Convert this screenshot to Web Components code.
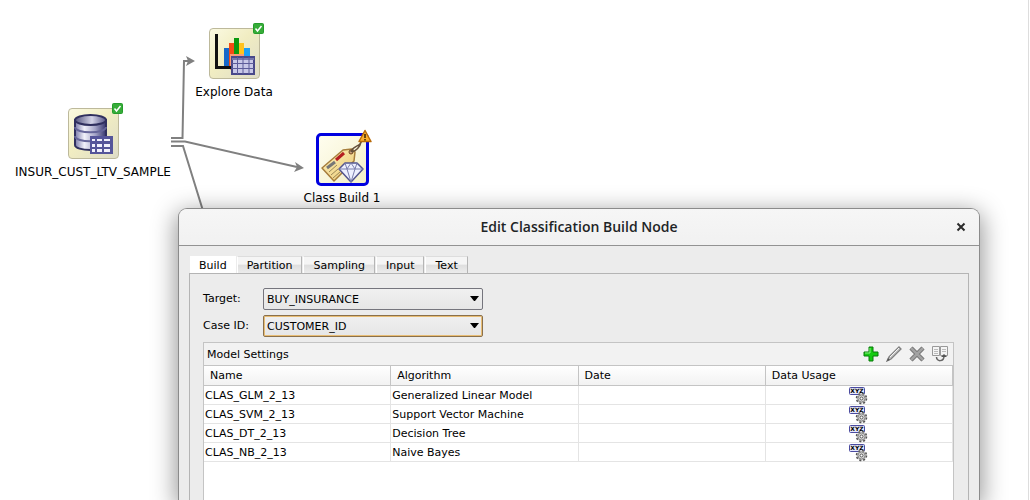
<!DOCTYPE html>
<html lang="en">
<head>
<meta charset="utf-8">
<title>Edit Classification Build Node</title>
<style>
html, body { margin: 0; height: 100%; }
body { font: 11px/16px "DejaVu Sans", sans-serif; color: #000; background: #fff; }
</style>
</head>
<body>
<workflow-canvas>
  <workflow-links></workflow-links>
  <workflow-node icon="source" status="ok" style="left:13px;top:108px">INSUR_CUST_LTV_SAMPLE</workflow-node>
  <workflow-node icon="explore" status="ok" style="left:154px;top:28px">Explore Data</workflow-node>
  <workflow-node icon="build" status="warn" selected style="left:262px;top:134px">Class Build 1</workflow-node>
  <node-dialog heading="Edit Classification Build Node">
    <tab-strip tabs="Build,Partition,Sampling,Input,Text">
      <combo-field label="Target:" value="BUY_INSURANCE"></combo-field>
      <combo-field label="Case ID:" value="CUSTOMER_ID" active></combo-field>
      <model-settings></model-settings>
    </tab-strip>
  </node-dialog>
</workflow-canvas>

<script>
const define = (name, render) => customElements.define(name, class extends HTMLElement {
  connectedCallback() {
    if (this.shadowRoot) return;
    this.attachShadow({ mode: 'open' }).innerHTML = render(this);
  }
});

const art = {
  source: `<defs><linearGradient id="m"><stop offset="0" stop-color="#7878a8"/><stop offset=".3" stop-color="#f2f2fb"/><stop offset=".65" stop-color="#a5a5c8"/><stop offset="1" stop-color="#34346c"/></linearGradient>
    <linearGradient id="t"><stop offset="0" stop-color="#55557f"/><stop offset=".55" stop-color="#d4d4e8"/><stop offset="1" stop-color="#565688"/></linearGradient></defs>
    <path d="M6 11v25c0 3 7 5 15.500 5S37 39 37 36V11z" fill="url(#m)" stroke="#30305f" stroke-width="2"/>
    <path d="M6 18c0 7 31 7 31 0M6 27c0 7 31 7 31 0" fill="none" stroke="#66669a" stroke-width="2"/>
    <ellipse cx="21.500" cy="11" rx="15.500" ry="5" fill="url(#t)" stroke="#30305f" stroke-width="2"/>
    <path d="M21 27h23v18H21z" fill="#55559a"/>
    <path d="M23 30h3v2h-3zM28 30h5v2h-5zM35 30h6v2h-6zM23 35h3v3h-3zM28 35h5v3h-5zM35 35h6v3h-6zM23 40h3v3h-3zM28 40h5v3h-5zM35 40h6v3h-6z" fill="#f1f1fc"/>`,
  explore: `<path d="M14 19h6v21h-6z" fill="#1768c8"/><path d="M19 14h5v26h-5z" fill="#f44b16"/><path d="M24 9h5v25h-5z" fill="#0a990f"/><path d="M29 14h5v20h-5z" fill="#ffc31c"/><path d="M34 19h6v12h-6z" fill="#1ba0f5"/>
    <path d="M20 25h14v16H20z" fill="#f89a78"/><path d="M6.500 5v33.500H24" fill="none" stroke="#111" stroke-width="3"/>
    <path d="M22 28h22v17H22z" fill="#c8c8e8" stroke="#49498a" stroke-width="2"/><path d="M22 30h22" stroke="#7777ad" stroke-width="2"/><path d="M27.500 28v17M33 28v17M39 28v17M22 34.500h22M22 39.500h22" stroke="#5c5c9a"/>`,
  build: `<defs><linearGradient id="g" x2="1" y2="1"><stop stop-color="#fff3bd"/><stop offset="1" stop-color="#e9c772"/></linearGradient></defs>
    <path d="M4 33 25 15l9-1 3 3-1 9-20 20z" fill="url(#g)" stroke="#a77e3c" stroke-width="1.500" stroke-linejoin="round"/>
    <path d="m9 33 8-6" stroke="#777" stroke-width="3"/><path d="m18 25 8-7" stroke="#b51e20" stroke-width="3"/>
    <path d="m13 40 7-6M15 43l7-6M11 37l8-7" stroke="#9b8856"/><circle cx="33" cy="17" r="2" fill="#c9a37e" stroke="#70421e"/>
    <path d="M33 17C35 10 41 13 44 6M34 17c4-1 8-5 9-10" fill="none" stroke="#65513c" stroke-width="1.500"/>
    <path d="m21 34 6-6h12l6 6-12 13z" fill="#edf0ff" stroke="#53558e" stroke-width="1.500" stroke-linejoin="round"/>
    <path d="M21 34h24M27 28l2 6 4-6 4 6 2-6M29 34l4 13 4-13" fill="none" stroke="#7a7ead"/>`
};
const badge = {
  ok: `<svg class="badge" width="11" height="11"><rect x=".5" y=".5" width="10" height="10" rx="1" fill="#36ac38" stroke="#249c2b"/><path d="m2.500 5.500 2 2.500 4-5" fill="none" stroke="#fff" stroke-width="1.500"/></svg>`,
  warn: `<svg class="badge" width="14" height="14" viewBox="0 0 14 14"><path d="M7 1.500 13 12.500H1z" fill="#fbb030" stroke="#b96b0a" stroke-width="1.500" stroke-linejoin="round"/><path d="M7 5v4M7 10v1.500" stroke="#3a2000" stroke-width="1.500"/></svg>`
};

define('workflow-canvas', () => `
  <style>:host{display:block;position:relative;min-height:100%;overflow:hidden;box-sizing:border-box;border-right:1px solid #ddd;margin-right:1px}</style>
  <slot></slot>`);

define('workflow-links', () => `
  <style>:host{display:block;position:absolute;inset:0} svg{display:block;overflow:visible}</style>
  <svg width="320" height="220" fill="none" stroke="#808080" stroke-width="2" aria-hidden="true">
    <path d="M171 138h11.500L184 61h5M171 141.500h14L297 167M171 146h12l21 68"/>
    <path d="m186 56 9 5-9 5 2-5zM295 162l9 6-10 4 3-5z" fill="#808080" stroke="none"/>
  </svg>`);

define('workflow-node', el => `
  <style>
    :host{display:block;position:absolute;width:160px;font-size:12px;line-height:16px}
    figure{margin:0;display:flex;flex-direction:column;align-items:center;gap:5px}
    .tile{position:relative;box-sizing:border-box;width:51px;height:51px;border:1px solid #bdb99b;border-radius:4px;background:linear-gradient(135deg,#fbfae2,#f1edc2 45%,#dedcc8)}
    :host([selected]) .tile{border-color:#eee;outline:3px solid #0000e0;outline-offset:-2px;background:linear-gradient(135deg,#fffef0,#f3efc8)}
    svg{display:block}
    .badge{position:absolute;right:-5px;top:-6px}
    figcaption{white-space:nowrap}
  </style>
  <figure><div class="tile"><svg width="49" height="49" viewBox="0 0 49 49">${art[el.getAttribute('icon')]}</svg>
  ${badge[el.getAttribute('status')]}</div><figcaption><slot></slot></figcaption></figure>`);

define('node-dialog', el => `
  <style>
    :host{position:absolute;left:178px;right:48px;top:208px;bottom:0;display:flex;flex-direction:column;box-sizing:border-box;border:1px solid #8b8b8b;border-bottom:0;border-radius:9px 9px 0 0;background:#ececec;box-shadow:0 6px 24px 2px rgba(0,0,0,.42)}
    header{display:grid;grid-template-columns:36px 1fr 36px;align-items:center;height:36px;border-bottom:1px solid #929292;border-radius:8px 8px 0 0;background:linear-gradient(#f6f6f6,#f1f1f1)}
    h1{grid-column:2;margin:0;text-align:center;font:600 14px/20px "Open Sans",sans-serif;color:#1e2426}
    button{border:0;background:none;padding:0;display:grid;place-items:center;height:24px}
    main{flex:1;min-height:0;display:flex;flex-direction:column;padding:10px 10px 0}
  </style>
  <header><h1>${el.getAttribute('heading')}</h1><button aria-label="Close"><svg width="10" height="10"><path d="m1.500 1.500 7 7m0-7-7 7" stroke="#2b2b2b" stroke-width="2"/></svg></button></header>
  <main><slot></slot></main>`);

define('tab-strip', el => `
  <style>
    :host{flex:1;display:flex;flex-direction:column;min-height:0}
    nav{display:flex;gap:1px;padding-left:1px}
    button{font:inherit;line-height:16px;height:17px;padding:1px 9px 0;border:0;border-right:1px solid #b5b5b5;border-left:1px solid #fff;border-top:1px solid #ddd;background:linear-gradient(#f5f5f5 45%,#dedede 50%,#ececec);margin:0}
    button[aria-selected=true]{padding:1px 8px 0;background:#fff;border-color:#fff}
    section{flex:1;display:flex;flex-direction:column;gap:5px;min-height:0;padding:14px 14px 0 13px;border:1px solid #b4b4b4;border-bottom:0}
  </style>
  <nav role="tablist">${el.getAttribute('tabs').split(',').map((t, i) => `<button role="tab" aria-selected="${i === 0}">${t}</button>`).join('')}</nav>
  <section role="tabpanel"><slot></slot></section>`);

define('combo-field', el => `
  <style>
    :host{display:grid;grid-template-columns:60px 220px;align-items:center}
    .box{position:relative;display:flex}
    select{appearance:none;box-sizing:border-box;width:100%;height:22px;margin:0;padding:1px 3px 0;border:1px solid #75757d;border-radius:2px;background:linear-gradient(#f0f0f0,#e6e6e6);font:inherit;color:#000}
    :host([active]) select{border-color:#8a704c;box-shadow:inset 0 0 0 1px #e8bd74}
    svg{position:absolute;right:4px;top:8px;pointer-events:none}
  </style>
  <label for="field">${el.getAttribute('label')}</label>
  <div class="box"><select id="field"><option>${el.getAttribute('value')}</option></select><svg width="9" height="5"><path d="M0 0h9L5 5H4z"/></svg></div>`);

const usage = `<svg width="19" height="19" viewBox="0 0 19 19" role="img" aria-label="Data usage">
  <rect x=".5" y="1.500" width="15" height="7" rx="1" fill="#e4e7fb" stroke="#4a4aa0"/>
  <text x="8" y="7" text-anchor="middle" font-family="DejaVu Sans" font-size="6" font-weight="bold">XYZ</text>
  <circle cx="12.500" cy="12.500" r="5" fill="#ccc" stroke="#555" stroke-width="1.500" stroke-dasharray="2 1.927"/>
  <circle cx="12.500" cy="12.500" r="3.500" fill="#ddd" stroke="#888"/><circle cx="12.500" cy="12.500" r="1.500" fill="#fff" stroke="#555"/></svg>`;

const tools = [
  ['Add', '<path d="M6 1h4v5h5v4h-5v5H6v-5H1V6h5z" fill="#16cb12" stroke="#087a0b"/><path d="M7 2v5H2" fill="none" stroke="#8cf183"/>'],
  ['Edit', '<path d="m1 15 2-4L13 1l2 2L5 13z" fill="#c4c4c4" stroke="#808080" stroke-width="1.300"/><path d="m4 11 9-9" stroke="#f3f3f3"/><path d="m1 15 3-1-2-2z" fill="#555"/>'],
  ['Delete', '<path d="m2 2 12 12M14 2 2 14" stroke="#707070" stroke-width="4.500"/><path d="m2 2 12 12M14 2 2 14" stroke="#a2a2a2" stroke-width="2.500"/>'],
  ['Compare', '<path d="M.5 .5h7v9h-7zM8.500 .5h7v9h-7z" fill="#f5f5f5" stroke="#999"/><path d="M2 3.500h4M2 5.500h4M2 7.500h4M10 3.500h4M10 5.500h4" stroke="#bbb"/><path d="M4.500 11c0 5 7.500 5 7.500-1" fill="none" stroke="#666" stroke-width="1.500"/><path d="m9 11 3-3 3 3z" fill="#555"/>']
];
const rows = [['CLAS_GLM_2_13', 'Generalized Linear Model'], ['CLAS_SVM_2_13', 'Support Vector Machine'], ['CLAS_DT_2_13', 'Decision Tree'], ['CLAS_NB_2_13', 'Naive Bayes']];

define('model-settings', () => `
  <style>
    :host{flex:1;min-height:0;display:flex;flex-direction:column;border:1px solid #c4c4c4;border-bottom:0;background:#fff}
    header{display:flex;justify-content:space-between;align-items:center;height:22px;padding:0 5px 0 3px;background:#f2f2f2}
    h2{margin:0;padding-top:1px;font:inherit}
    .tools{display:flex;gap:7px}
    button{border:0;background:none;padding:0;width:16px;height:16px} svg{display:block}
    table{border-collapse:separate;border-spacing:0;table-layout:fixed;width:100%;border-top:1px solid #c4c4c4}
    th,td{box-sizing:border-box;height:19px;padding:1px 1px 0;line-height:16px;text-align:left;font-weight:400;border-right:1px solid #e4e4e4;border-bottom:1px solid #e4e4e4;white-space:nowrap}
    th{height:20px;padding:0 6px;border-color:#c4c4c4;background:linear-gradient(#fff,#f2f2f2)}
    td svg{margin:-1px auto}
  </style>
  <header><h2>Model Settings</h2><div class="tools">${tools.map(([n, p]) => `<button aria-label="${n}"><svg width="16" height="16">${p}</svg></button>`).join('')}</div></header>
  <table><thead><tr><th>Name</th><th>Algorithm</th><th>Date</th><th>Data Usage</th></tr></thead>
  <tbody>${rows.map(([n, a]) => `<tr><td>${n}</td><td>${a}</td><td></td><td>${usage}</td></tr>`).join('')}</tbody></table>`);
</script>
</body>
</html>
